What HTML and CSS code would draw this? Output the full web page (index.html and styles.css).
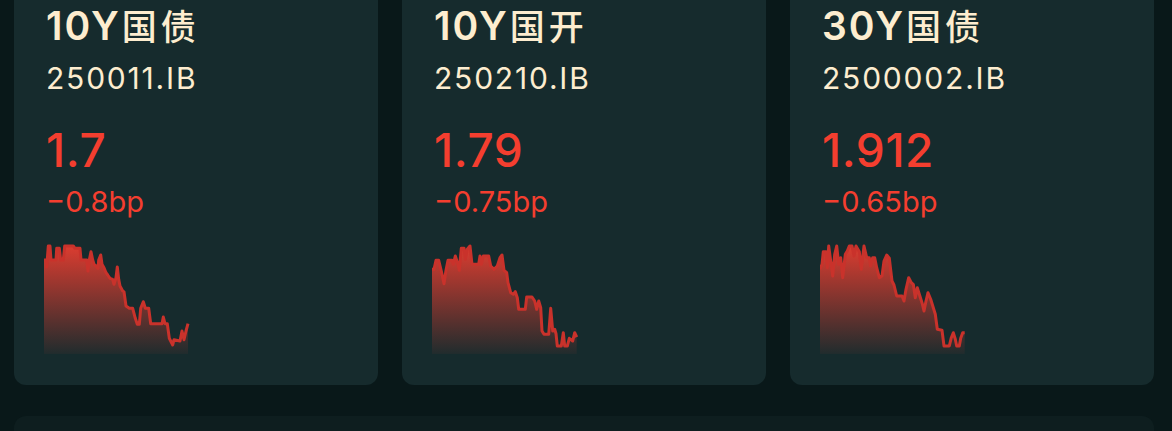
FILE: index.html
```html
<!DOCTYPE html>
<html lang="zh-CN">
<head>
<meta charset="utf-8">
<title>Bonds</title>
<link rel="stylesheet" href="styles.css">
</head>
<body>
<div class="page">
  <div class="cards">
    <div class="card">
      <div class="title">10Y<span class="cjk">国债</span></div>
      <div class="code">250011.IB</div>
      <div class="price">1.7</div>
      <div class="change">−0.8bp</div>
      <svg class="spark" width="146" height="110" viewBox="0 0 146 110">
        <defs>
          <linearGradient id="g1" x1="0" y1="0" x2="0" y2="1">
            <stop offset="0" stop-color="#e63d30" stop-opacity="0.95"/>
            <stop offset="1" stop-color="#e63d30" stop-opacity="0.05"/>
          </linearGradient>
        </defs>
        <path class="area" fill="url(#g1)" d="M0,16 L2,16 L2.7,23 L4.3,2 L6,2 L7,16 L12,16 L12.7,4.3 L15.3,4.3 L16.7,16 L19.3,16 L20.7,2 L29.3,2 L31,4.3 L36,4.3 L37,16 L42.7,16 L44,27 L45.3,16 L47,7.7 L48.7,16 L50,20.3 L52,22 L54,24.3 L54.7,16 L56.7,11 L58,20.3 L60,23.7 L62,28.7 L63.7,31 L66,34.3 L68.7,35.3 L70,40.3 L72,33.7 L73.3,23 L74.7,35.3 L76,42 L78.7,47 L80,47.7 L82,62 L85.3,64.3 L88.7,64.3 L91.3,74.3 L93.3,80.3 L95.3,80.3 L96.7,64.3 L99.3,57.7 L101.3,64.3 L104.7,64.3 L106.7,79.7 L118,79.7 L119.3,73 L121,79.7 L123.3,79.7 L125.3,94.3 L128.7,101 L130,95.7 L136,97 L138,87 L140,95.7 L142,87 L144,79.7 L144,110 L0,110 Z"/>
        <path class="line" d="M0,16 L2,16 L2.7,23 L4.3,2 L6,2 L7,16 L12,16 L12.7,4.3 L15.3,4.3 L16.7,16 L19.3,16 L20.7,2 L29.3,2 L31,4.3 L36,4.3 L37,16 L42.7,16 L44,27 L45.3,16 L47,7.7 L48.7,16 L50,20.3 L52,22 L54,24.3 L54.7,16 L56.7,11 L58,20.3 L60,23.7 L62,28.7 L63.7,31 L66,34.3 L68.7,35.3 L70,40.3 L72,33.7 L73.3,23 L74.7,35.3 L76,42 L78.7,47 L80,47.7 L82,62 L85.3,64.3 L88.7,64.3 L91.3,74.3 L93.3,80.3 L95.3,80.3 L96.7,64.3 L99.3,57.7 L101.3,64.3 L104.7,64.3 L106.7,79.7 L118,79.7 L119.3,73 L121,79.7 L123.3,79.7 L125.3,94.3 L128.7,101 L130,95.7 L136,97 L138,87 L140,95.7 L142,87 L144,79.7"/>
      </svg>
    </div>
    <div class="card">
      <div class="title">10Y<span class="cjk">国开</span></div>
      <div class="code">250210.IB</div>
      <div class="price">1.79</div>
      <div class="change">−0.75bp</div>
      <svg class="spark" width="146" height="110" viewBox="0 0 146 110">
        <defs>
          <linearGradient id="g2" x1="0" y1="0" x2="0" y2="1">
            <stop offset="0" stop-color="#e63d30" stop-opacity="0.95"/>
            <stop offset="1" stop-color="#e63d30" stop-opacity="0.05"/>
          </linearGradient>
        </defs>
        <path class="area" fill="url(#g2)" d="M0,25.3 L2,25.3 L4,16.3 L6.7,16.3 L9.3,27 L12,39.7 L14,26.3 L16,16.3 L20,16.3 L21.3,20.3 L23.3,12 L26,20.3 L27.3,26.3 L29.3,4.3 L32,4.3 L33.3,15.3 L35.3,5.3 L38,2 L40,20.3 L46.7,20.3 L48,12 L49.3,20.3 L51.3,12 L56.7,12 L58.7,22 L62,25.3 L65.3,22 L68,13.7 L70,11 L72,26.3 L74.7,28.7 L76,38.7 L78.7,48.7 L81.3,50.3 L83.3,47.7 L85.3,53.7 L86.7,65.3 L93.3,65.3 L94.7,53 L100,53 L102.7,57 L104.7,65.3 L106.7,57 L108.7,63.7 L110,87 L112,90.3 L116.7,90.3 L118.7,64.3 L120.7,87 L122.7,85.3 L124,89.7 L125.3,102 L129.3,102 L131.3,88.7 L132.7,102 L135.3,102 L137.3,94.3 L140.7,97 L142.7,88.7 L144.7,93 L144.7,110 L0,110 Z"/>
        <path class="line" d="M0,25.3 L2,25.3 L4,16.3 L6.7,16.3 L9.3,27 L12,39.7 L14,26.3 L16,16.3 L20,16.3 L21.3,20.3 L23.3,12 L26,20.3 L27.3,26.3 L29.3,4.3 L32,4.3 L33.3,15.3 L35.3,5.3 L38,2 L40,20.3 L46.7,20.3 L48,12 L49.3,20.3 L51.3,12 L56.7,12 L58.7,22 L62,25.3 L65.3,22 L68,13.7 L70,11 L72,26.3 L74.7,28.7 L76,38.7 L78.7,48.7 L81.3,50.3 L83.3,47.7 L85.3,53.7 L86.7,65.3 L93.3,65.3 L94.7,53 L100,53 L102.7,57 L104.7,65.3 L106.7,57 L108.7,63.7 L110,87 L112,90.3 L116.7,90.3 L118.7,64.3 L120.7,87 L122.7,85.3 L124,89.7 L125.3,102 L129.3,102 L131.3,88.7 L132.7,102 L135.3,102 L137.3,94.3 L140.7,97 L142.7,88.7 L144.7,93"/>
      </svg>
    </div>
    <div class="card">
      <div class="title">30Y<span class="cjk">国债</span></div>
      <div class="code">2500002.IB</div>
      <div class="price">1.912</div>
      <div class="change">−0.65bp</div>
      <svg class="spark" width="146" height="110" viewBox="0 0 146 110">
        <defs>
          <linearGradient id="g3" x1="0" y1="0" x2="0" y2="1">
            <stop offset="0" stop-color="#e63d30" stop-opacity="0.95"/>
            <stop offset="1" stop-color="#e63d30" stop-opacity="0.05"/>
          </linearGradient>
        </defs>
        <path class="area" fill="url(#g3)" d="M0,25.3 L2,20.3 L3.3,7.7 L6,7.7 L7.3,23.7 L8.7,2 L10.7,17 L12.7,32 L14.7,10.3 L16.7,2 L18.7,20.3 L20.7,13.7 L22.7,33.7 L25.3,10.3 L27.3,7 L29.3,2 L32,2 L34,12 L36,2 L39.3,7.7 L41.3,25.3 L44,2 L46.7,13.7 L49.3,13.7 L50.7,22 L52.7,13.7 L54.7,13.7 L56.7,23.7 L59.3,33.7 L62,32 L64,17 L66.7,11 L69.3,14.3 L72,37 L74,41 L76.7,52 L82,52 L84,57 L86,45.3 L88.7,33.7 L91.3,38.7 L93.3,40.3 L95.3,53.7 L97.3,43.7 L99.3,50.3 L102,58.7 L104,67 L106,57 L108,48.7 L110.7,55.3 L113.3,63.7 L115.3,70.3 L117.3,85.3 L122,86.3 L124,102 L129.3,102 L131.3,93.7 L133.3,88.7 L135.3,95.3 L136.7,102 L139.3,102 L140.7,94.3 L142.7,88.7 L144.7,88.7 L144.7,110 L0,110 Z"/>
        <path class="line" d="M0,25.3 L2,20.3 L3.3,7.7 L6,7.7 L7.3,23.7 L8.7,2 L10.7,17 L12.7,32 L14.7,10.3 L16.7,2 L18.7,20.3 L20.7,13.7 L22.7,33.7 L25.3,10.3 L27.3,7 L29.3,2 L32,2 L34,12 L36,2 L39.3,7.7 L41.3,25.3 L44,2 L46.7,13.7 L49.3,13.7 L50.7,22 L52.7,13.7 L54.7,13.7 L56.7,23.7 L59.3,33.7 L62,32 L64,17 L66.7,11 L69.3,14.3 L72,37 L74,41 L76.7,52 L82,52 L84,57 L86,45.3 L88.7,33.7 L91.3,38.7 L93.3,40.3 L95.3,53.7 L97.3,43.7 L99.3,50.3 L102,58.7 L104,67 L106,57 L108,48.7 L110.7,55.3 L113.3,63.7 L115.3,70.3 L117.3,85.3 L122,86.3 L124,102 L129.3,102 L131.3,93.7 L133.3,88.7 L135.3,95.3 L136.7,102 L139.3,102 L140.7,94.3 L142.7,88.7 L144.7,88.7"/>
      </svg>
    </div>
  </div>
  <div class="panel"></div>
</div>
</body>
</html>
```
FILE: styles.css
```css
html, body {
  margin: 0;
  padding: 0;
  background: #091819;
  overflow: hidden;
}
body {
  font-family: "Inter", "Noto Sans CJK SC", sans-serif;
}
.page {
  padding: 0 18px 0 14px;
}
.cards {
  display: grid;
  grid-template-columns: repeat(3, 1fr);
  gap: 24px;
  margin-top: -22px;
}
.card {
  background: #162b2d;
  border-radius: 12px;
  padding: 24px 32px 31px 32px;
  display: flex;
  flex-direction: column;
  align-items: flex-start;
}
.title {
  color: #fdedcf;
  font-size: 39px;
  line-height: 46px;
  font-weight: 600;
  letter-spacing: 2px;
  white-space: nowrap;
}
.cjk {
  font-family: "Noto Sans CJK SC", sans-serif;
  font-size: 35px;
  font-weight: 500;
  letter-spacing: 4px;
  margin-left: 1px;
}
.code {
  color: #fdedcf;
  font-size: 30px;
  line-height: 36px;
  margin-top: 11px;
  font-weight: 400;
  letter-spacing: 1.8px;
}
.price {
  color: #f43e2f;
  font-size: 46px;
  line-height: 56px;
  margin-top: 26px;
  font-weight: 500;
  letter-spacing: 0.6px;
}
.change {
  color: #f43e2f;
  font-size: 29px;
  line-height: 35px;
  margin-top: 6px;
}
.spark {
  display: block;
  margin-top: 25px;
  margin-left: -2px;
}
.line {
  fill: none;
  stroke: #c9322b;
  stroke-width: 3;
  stroke-linejoin: round;
}
.panel {
  margin-top: 31px;
  height: 60px;
  background: #0e1e1f;
  border-radius: 12px;
}
```
